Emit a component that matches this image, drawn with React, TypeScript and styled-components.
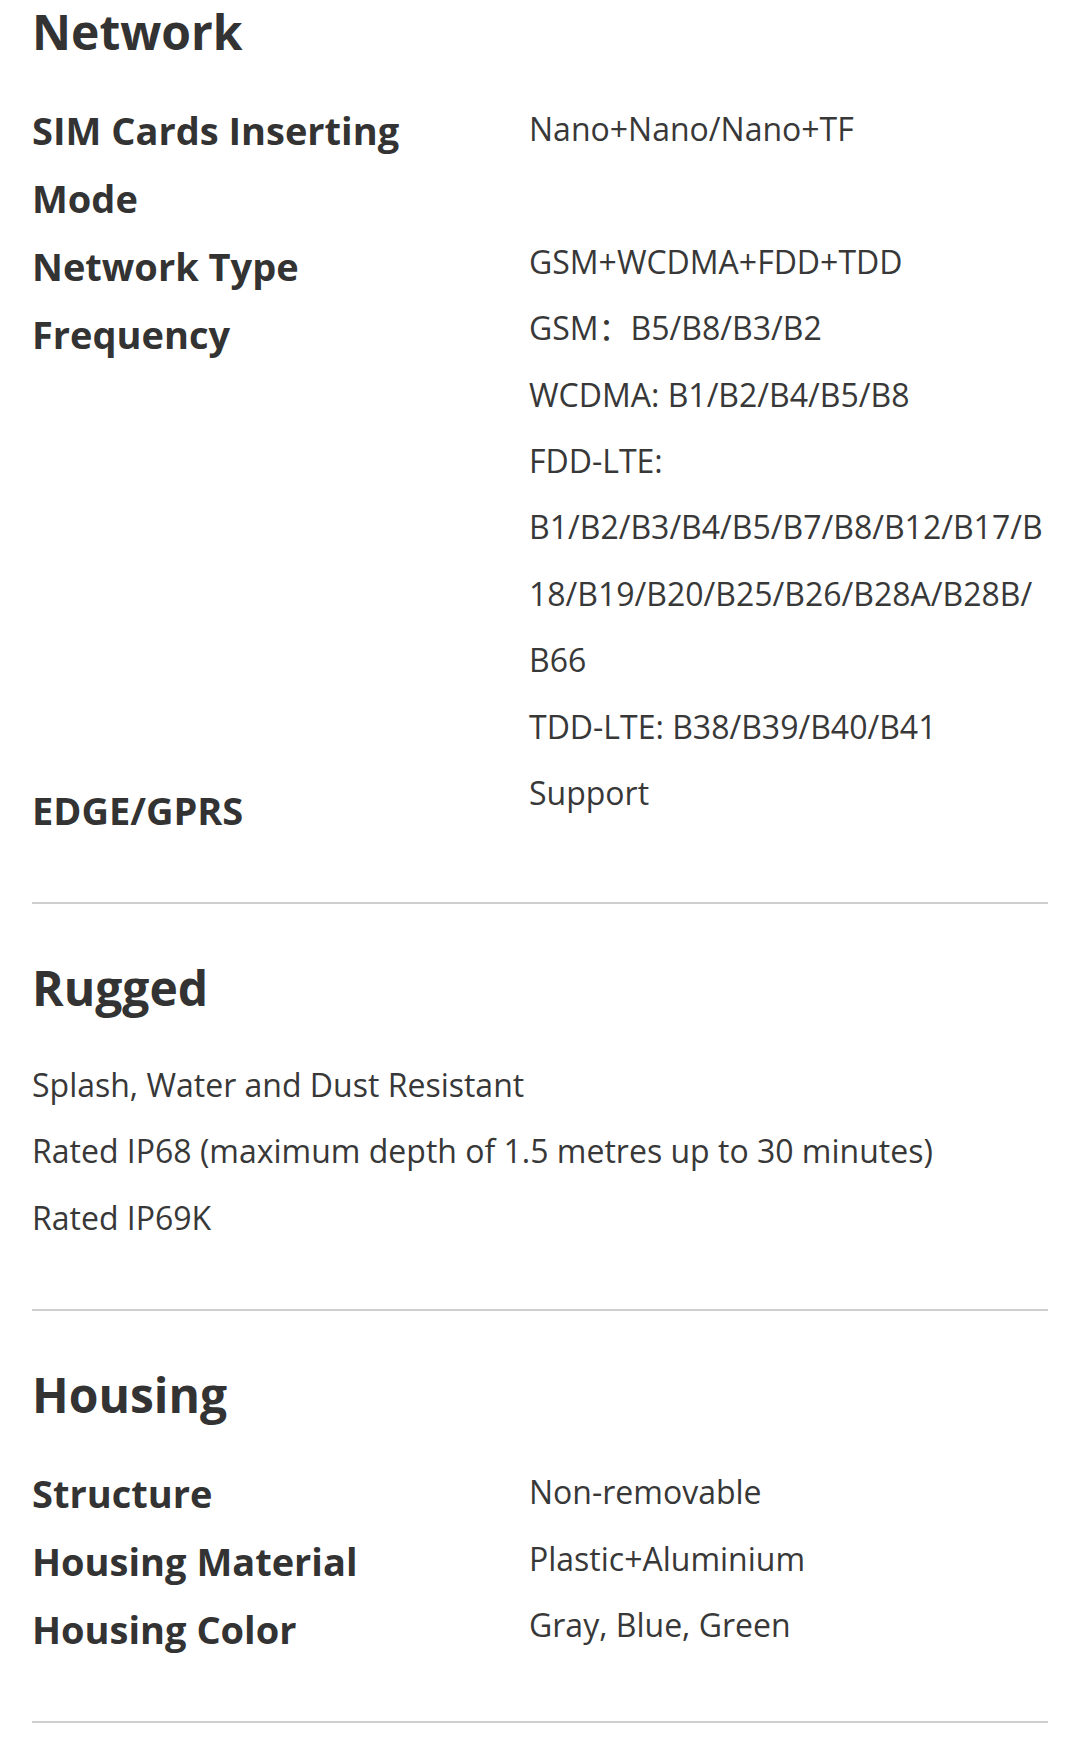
import * as React from "react";
import styled, { createGlobalStyle } from "styled-components";

const GlobalStyle = createGlobalStyle`
	html, body {
		margin: 0;
		padding: 0;
		background: #ffffff;
	}
	body {
		font-family: "Open Sans", "Noto Sans CJK SC", sans-serif;
		color: #333333;
	}
`;

const Page = styled.main`
	padding: 0 32px;
`;

const Section = styled.section<{ $first?: boolean }>`
	padding: ${({ $first }) => ($first ? "0" : "52px")} 0 58px;
	border-bottom: 2px solid #cfcfcf;
`;

const Heading = styled.h2`
	margin: 0 0 32px;
	font-size: 48px;
	font-weight: 700;
	line-height: 64px;
	color: #333333;
`;

const SpecColumns = styled.div`
	display: flex;
	align-items: flex-start;
`;

const LabelColumn = styled.div`
	flex: none;
	width: 497px;
	padding-right: 60px;
	box-sizing: border-box;
`;

const ValueColumn = styled.div`
	flex: 1;
	min-width: 0;
`;

const Label = styled.p`
	margin: 0;
	font-size: 38px;
	font-weight: 700;
	line-height: 68px;
	color: #333333;
`;

const LabelGap = styled.div<{ $lines: number }>`
	height: ${({ $lines }) => $lines * 68}px;
`;

const Line = styled.p`
	margin: 0;
	font-size: 32px;
	font-weight: 400;
	line-height: 66.4px;
	color: #383838;
	white-space: nowrap;
`;

const LineGap = styled.div<{ $lines: number }>`
	height: ${({ $lines }) => $lines * 66.4}px;
`;

// a number stands for that many empty lines in the column
type Entry = string | number;

type SpecBlock = {
	title: string;
	labels?: Entry[];
	values: Entry[];
};

const sections: SpecBlock[] = [
	{
		title: "Network",
		labels: ["SIM Cards Inserting Mode", "Network Type", "Frequency", 6, "EDGE/GPRS"],
		values: [
			"Nano+Nano/Nano+TF",
			1,
			"GSM+WCDMA+FDD+TDD",
			"GSM\uFF1AB5/B8/B3/B2",
			"WCDMA: B1/B2/B4/B5/B8",
			"FDD-LTE:",
			"B1/B2/B3/B4/B5/B7/B8/B12/B17/B",
			"18/B19/B20/B25/B26/B28A/B28B/",
			"B66",
			"TDD-LTE: B38/B39/B40/B41",
			"Support",
		],
	},
	{
		title: "Rugged",
		values: [
			"Splash, Water and Dust Resistant",
			"Rated IP68 (maximum depth of 1.5 metres up to 30 minutes)",
			"Rated IP69K",
		],
	},
	{
		title: "Housing",
		labels: ["Structure", "Housing Material", "Housing Color"],
		values: ["Non-removable", "Plastic+Aluminium", "Gray, Blue, Green"],
	},
];

const SpecSection: React.FC<{ block: SpecBlock; first?: boolean }> = ({ block, first }) => {
	const lines = block.values.map((v, i) =>
		typeof v === "number" ? <LineGap key={i} $lines={v} /> : <Line key={i}>{v}</Line>
	);

	return (
		<Section $first={first}>
			<Heading>{block.title}</Heading>
			{block.labels ? (
				<SpecColumns>
					<LabelColumn>
						{block.labels.map((l, i) =>
							typeof l === "number" ? (
								<LabelGap key={i} $lines={l} />
							) : (
								<Label key={i}>{l}</Label>
							)
						)}
					</LabelColumn>
					<ValueColumn>{lines}</ValueColumn>
				</SpecColumns>
			) : (
				<div>{lines}</div>
			)}
		</Section>
	);
};

const App: React.FC = () => {
	return (
		<>
			<GlobalStyle />
			<Page>
				{sections.map((s, i) => (
					<SpecSection key={s.title} block={s} first={i === 0} />
				))}
			</Page>
		</>
	);
};

export default App;
